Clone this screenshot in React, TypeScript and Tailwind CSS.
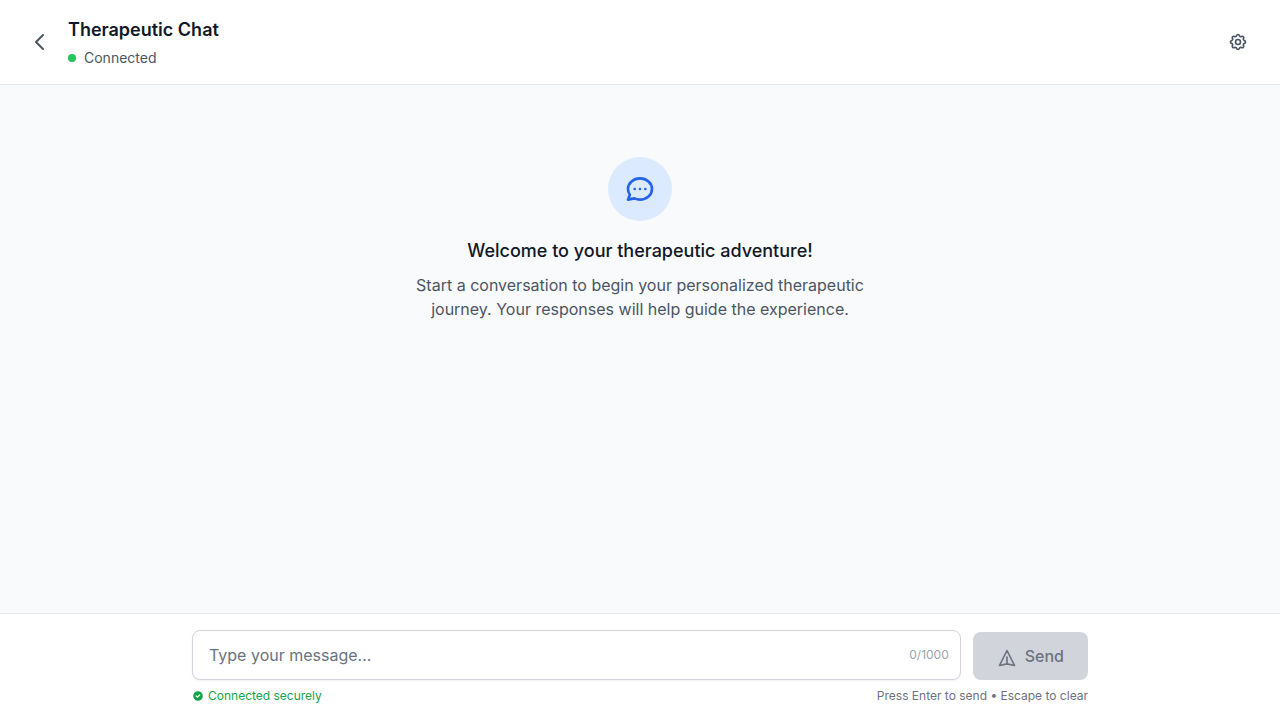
import { useState } from "react";
import type { KeyboardEvent } from "react";

const MAX_LENGTH = 1000;

type IconProps = { className: string; paths: string[] };

function OutlineIcon({ className, paths }: IconProps) {
  return (
    <svg
      className={className}
      fill="none"
      stroke="currentColor"
      viewBox="0 0 24 24"
      strokeWidth={2}
      strokeLinecap="round"
      strokeLinejoin="round"
      aria-hidden="true"
    >
      {paths.map((d) => (
        <path key={d} d={d} />
      ))}
    </svg>
  );
}

const chevronLeft = ["M15 19l-7-7 7-7"];
const cog = [
  "M10.325 4.317c.426-1.756 2.924-1.756 3.35 0a1.724 1.724 0 002.573 1.066c1.543-.94 3.31.826 2.37 2.37a1.724 1.724 0 001.065 2.572c1.756.426 1.756 2.924 0 3.35a1.724 1.724 0 00-1.066 2.573c.94 1.543-.826 3.31-2.37 2.37a1.724 1.724 0 00-2.572 1.065c-.426 1.756-2.924 1.756-3.35 0a1.724 1.724 0 00-2.573-1.066c-1.543.94-3.31-.826-2.37-2.37a1.724 1.724 0 00-1.065-2.572c-1.756-.426-1.756-2.924 0-3.35a1.724 1.724 0 001.066-2.573c-.94-1.543.826-3.31 2.37-2.37.996.608 2.296.07 2.572-1.065z",
  "M15 12a3 3 0 11-6 0 3 3 0 016 0z",
];
const chat = [
  "M8 12h.01M12 12h.01M16 12h.01M21 12c0 4.418-4.03 8-9 8a9.863 9.863 0 01-4.255-.949L3 20l1.395-3.72C3.512 15.042 3 13.574 3 12c0-4.418 4.03-8 9-8s9 3.582 9 8z",
];
const send = ["M12 19l9 2-9-18-9 18 9-2zm0 0v-8"];

function Header() {
  return (
    <header className="flex items-center justify-between border-b border-[#e5e7eb] bg-white px-6 py-4">
      <div className="flex items-center gap-3">
        <button type="button" aria-label="Go back" className="rounded-lg p-1 text-[#4b5563]">
          <OutlineIcon className="size-6" paths={chevronLeft} />
        </button>
        <div>
          <h1 className="text-lg font-semibold text-[#111827]">Therapeutic Chat</h1>
          <div className="mt-1 flex items-center gap-2 text-sm text-[#4b5563]">
            <span className="size-2 rounded-full bg-[#22c55e]" />
            <span>Connected</span>
          </div>
        </div>
      </div>
      <button type="button" aria-label="Settings" className="rounded-lg p-2 text-[#4b5563]">
        <OutlineIcon className="size-5" paths={cog} />
      </button>
    </header>
  );
}

function Welcome() {
  return (
    <main className="flex-1 overflow-y-auto p-6">
      <div className="flex flex-col items-center py-12 text-center">
        <div className="flex size-16 items-center justify-center rounded-full bg-[#dbeafe] text-[#2563eb]">
          <OutlineIcon className="size-8" paths={chat} />
        </div>
        <h2 className="mt-4 text-lg font-medium text-[#111827]">
          Welcome to your therapeutic adventure!
        </h2>
        <p className="mt-2 max-w-md text-[#4b5563]">
          Start a conversation to begin your personalized therapeutic journey. Your responses will
          help guide the experience.
        </p>
      </div>
    </main>
  );
}

function Composer() {
  const [message, setMessage] = useState("");

  function handleKeyDown(event: KeyboardEvent<HTMLTextAreaElement>) {
    if (event.key === "Escape" || (event.key === "Enter" && !event.shiftKey)) {
      event.preventDefault();
      setMessage("");
    }
  }

  return (
    <footer className="border-t border-[#e5e7eb] bg-white p-4">
      <form
        className="mx-auto max-w-4xl"
        onSubmit={(event) => {
          event.preventDefault();
          setMessage("");
        }}
      >
        <div className="flex items-end gap-3">
          <div className="relative flex flex-1">
            <textarea
              aria-label="Message"
              rows={1}
              maxLength={MAX_LENGTH}
              value={message}
              onChange={(event) => setMessage(event.target.value)}
              onKeyDown={handleKeyDown}
              placeholder="Type your message..."
              className="w-full resize-none rounded-lg border border-[#d1d5db] bg-white py-3 pr-20 pl-4 text-base text-[#111827] shadow-xs placeholder:text-[#6b7280]"
            />
            <span className="pointer-events-none absolute inset-y-0 right-3 flex items-center text-xs text-[#9ca3af]">
              {message.length}/{MAX_LENGTH}
            </span>
          </div>
          <button
            type="submit"
            disabled={message.length === 0}
            className="rounded-lg bg-[#2563eb] px-6 py-3 font-medium text-white disabled:bg-[#d1d5db] disabled:text-[#6b7280]"
          >
            <OutlineIcon className="mr-2 inline-block size-5 align-middle" paths={send} />
            Send
          </button>
        </div>
        <div className="mt-2 flex items-center justify-between text-xs text-[#6b7280]">
          <span className="flex items-center gap-1 text-[#16a34a]">
            <svg className="size-3" fill="currentColor" viewBox="0 0 20 20" aria-hidden="true">
              <path
                fillRule="evenodd"
                clipRule="evenodd"
                d="M10 18a8 8 0 100-16 8 8 0 000 16zm3.707-9.293a1 1 0 00-1.414-1.414L9 10.586 7.707 9.293a1 1 0 00-1.414 1.414l2 2a1 1 0 001.414 0l4-4z"
              />
            </svg>
            Connected securely
          </span>
          <span>Press Enter to send • Escape to clear</span>
        </div>
      </form>
    </footer>
  );
}

export default function App() {
  return (
    <div className="flex h-screen flex-col bg-[#f9fafb] font-['Inter',sans-serif]">
      <Header />
      <Welcome />
      <Composer />
    </div>
  );
}
